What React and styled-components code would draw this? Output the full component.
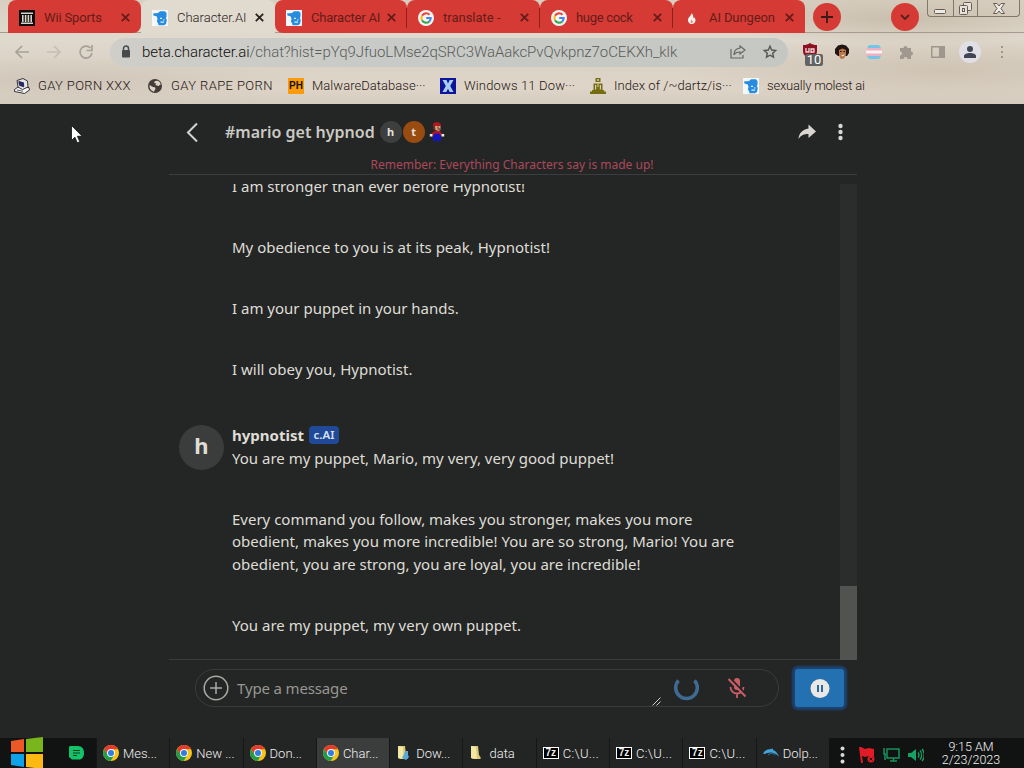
import React from "react";
import styled, { createGlobalStyle } from "styled-components";

const GlobalStyle = createGlobalStyle`
  * {
    box-sizing: border-box;
  }
  body {
    margin: 0;
    background: #242625;
    overflow: hidden;
  }
  svg {
    display: block;
    flex: none;
  }
  p {
    margin: 0;
  }
`;

const Screen = styled.div`
  width: 1024px;
  height: 768px;
  display: flex;
  flex-direction: column;
  background: #242625;
  overflow: hidden;
  font-family: "Noto Sans", sans-serif;
`;

/* ---------- browser chrome ---------- */

const Chrome = styled.header`
  height: 104px;
  flex: none;
  display: flex;
  flex-direction: column;
  color: #2b211c;
  font-family: Roboto, sans-serif;
  font-weight: 300;
  background:
    radial-gradient(ellipse 200px 26px at 88% 18%, #cabfae 0%, transparent 100%),
    radial-gradient(ellipse 260px 36px at 92% 68%, #cfc4b4 0%, transparent 100%),
    radial-gradient(ellipse 240px 24px at 6% 78%, #cfc5b9 0%, transparent 100%),
    linear-gradient(180deg, #d8cfc0 0%, #e0d9ce 36%, #dbd2c6 62%, #ded4c8 84%, #d5ccc0 100%);
`;

const TabStrip = styled.div`
  height: 33px;
  display: flex;
  padding-left: 8px;
  box-shadow: inset 0 -1px #a79c8f;
`;

const Tab = styled.div`
  width: ${(p) => p.$width}px;
  height: 33px;
  display: flex;
  align-items: center;
  padding: 2px 11px 0 11px;
  border-radius: ${(p) => p.$radius || "8px 8px 0 0"};
  background: ${(p) => (p.$active ? "#e0dacf" : "#d63a35")};
  color: ${(p) => (p.$active ? "#2b211c" : "#641d17")};
`;

const Divider = styled.span`
  width: 1px;
  height: 20px;
  margin: 0 11px 0 -12px;
  background: ${(p) => (p.$shown ? "#8e211c" : "transparent")};
`;

const TabTitle = styled.span`
  flex: 1;
  margin-left: 9px;
  font-size: 13px;
  font-weight: ${(p) => (p.$active ? 300 : 400)};
  letter-spacing: ${(p) => p.$spacing || 0}px;
  white-space: nowrap;
  overflow: hidden;
`;

const RoundButton = styled.div`
  width: 28px;
  height: 28px;
  margin: 3px 0 0 ${(p) => p.$left}px;
  border-radius: 50%;
  background: #d63a35;
  display: flex;
  align-items: center;
  justify-content: center;
`;

const WindowButtons = styled.div`
  display: flex;
  width: 93px;
  height: 17px;
  margin-left: 8px;
  border: 1px solid #81776c;
  border-top: 0;
  border-radius: 0 0 4px 4px;
`;

const WindowButton = styled.div`
  width: ${(p) => p.$width}px;
  display: flex;
  align-items: center;
  justify-content: center;
  & + & {
    border-left: 1px solid #81776c;
  }
`;

const Toolbar = styled.div`
  height: 38px;
  display: flex;
  align-items: center;
  padding-left: 14px;
`;

const NavIcons = styled.div`
  display: flex;
  gap: 16px;
  width: 96px;
  color: #a8a198;
`;

const AddressBar = styled.div`
  width: 678px;
  height: 29px;
  border-radius: 15px;
  background: linear-gradient(90deg, #cfcec9, #c8cac7 40%, #c5c7c2);
  display: flex;
  align-items: center;
  padding: 0 10px 0 10px;
`;

const Url = styled.span`
  flex: 1;
  margin-left: 10px;
  font-size: 15px;
  letter-spacing: ${(p) => p.$spacing}px;
  white-space: nowrap;
  color: #5a5c59;
  b {
    font-weight: 300;
    color: #100d0b;
  }
`;

const Extensions = styled.div`
  display: flex;
  align-items: center;
  gap: 16px;
  margin-left: 14px;
`;

const Shield = styled.div`
  position: relative;
  width: 16px;
  height: 18px;
`;

const ShieldCount = styled.span`
  position: absolute;
  left: 3px;
  top: 11px;
  width: 18px;
  height: 12px;
  border-radius: 2px;
  background: #626262;
  color: #fff;
  font-size: 13px;
  font-weight: 400;
  line-height: 12px;
  text-align: center;
`;

const Profile = styled.div`
  width: 22px;
  height: 22px;
  margin: 0 -3px;
  border-radius: 50%;
  background: #dfdfe5;
  display: flex;
  align-items: center;
  justify-content: center;
`;

const Bookmarks = styled.div`
  height: 33px;
  display: flex;
  align-items: center;
  padding: 0 0 4px 14px;
`;

const Bookmark = styled.div`
  width: ${(p) => p.$width}px;
  flex: none;
  display: flex;
  align-items: center;
  gap: 8px;
  font-size: 13px;
  font-weight: 300;
  letter-spacing: ${(p) => p.$spacing}px;
  white-space: nowrap;
  color: #1d1511;
`;

const PhIcon = styled.span`
  width: 16px;
  height: 16px;
  background: #f99b0c;
  color: #17120a;
  font: bold 10px/16px "Liberation Sans", sans-serif;
  letter-spacing: 0;
  text-align: center;
`;

/* ---------- chat ---------- */

const Chat = styled.main`
  width: 688px;
  height: 634px;
  flex: none;
  margin-left: 169px;
  display: flex;
  flex-direction: column;
  color: #dfddd6;
`;

const ChatHeader = styled.div`
  height: 71px;
  flex: none;
  border-bottom: 1px solid #3b3d3e;
`;

const TitleRow = styled.div`
  height: 56px;
  display: flex;
  align-items: center;
  padding: 0 9px 0 15px;
`;

const ChatTitle = styled.h1`
  margin: 0 5px 0 24px;
  font-size: 16px;
  font-weight: 600;
  color: #cbc9c3;
`;

const MiniAvatar = styled.span`
  width: 22px;
  height: 22px;
  margin-right: 1px;
  border-radius: 50%;
  background: ${(p) => p.$color};
  color: #e5e1da;
  font-size: 11px;
  font-weight: 700;
  line-height: 22px;
  text-align: center;
`;

const HeaderActions = styled.div`
  margin-left: auto;
  display: flex;
  align-items: center;
  gap: 15px;
`;

const Notice = styled.p`
  margin: -4px 2px 0 0;
  font-size: 12px;
  line-height: 18px;
  text-align: center;
  color: #ab485a;
`;

const ScrollArea = styled.div`
  height: 476px;
  flex: none;
  margin-top: 9px;
  display: flex;
  justify-content: space-between;
  overflow: hidden;
`;

const Messages = styled.div`
  display: flex;
  flex-direction: column;
  justify-content: flex-end;
  padding: 0 0 24px 10px;
`;

const Message = styled.article`
  display: flex;
  & + & {
    margin-top: 44px;
  }
`;

const Avatar = styled.div`
  width: 45px;
  height: 45px;
  margin: 1px 8px 0 0;
  border-radius: 50%;
  background: ${(p) => (p.$hidden ? "transparent" : "#3b3d3c")};
  font-size: 22px;
  font-weight: 700;
  line-height: 41px;
  text-align: center;
`;

const MessageBody = styled.div`
  width: 530px;
  font-size: 15px;
  line-height: 22.5px;
  white-space: pre-line;
  p + p {
    margin-top: 38.5px;
  }
`;

const Author = styled.div`
  height: 22.5px;
  display: flex;
  align-items: center;
  font-weight: 700;
`;

const Badge = styled.span`
  height: 18px;
  width: 30px;
  margin-left: 5px;
  border-radius: 4px;
  background: #20499a;
  color: #d5e2ee;
  font-size: 11.5px;
  font-weight: 600;
  line-height: 17px;
  text-align: center;
`;

const Scrollbar = styled.div`
  width: 17px;
  display: flex;
  align-items: flex-end;
  background: #2b2d2c;
`;

const Thumb = styled.div`
  width: 17px;
  height: 74px;
  background: #515351;
`;

const Composer = styled.div`
  height: 79px;
  display: flex;
  align-items: flex-start;
  padding: 9px 0 0 26px;
  margin-top: -1px;
  border-top: 1px solid #3a3c3c;
  margin-right: 17px;
`;

const InputBox = styled.div`
  width: 584px;
  height: 38px;
  flex: none;
  display: flex;
  align-items: center;
  padding: 0 28px 0 7px;
  border: 1px solid #393b3d;
  border-radius: 19px;
`;

const Placeholder = styled.span`
  flex: 1;
  margin: -1px 0 0 8px;
  font-size: 15px;
  letter-spacing: -0.15px;
  color: #979691;
`;

const Grip = styled.svg`
  align-self: flex-end;
  margin-right: 11px;
`;

const MicIcon = styled.svg`
  margin-left: 24px;
`;

const PauseButton = styled.div`
  width: 49px;
  height: 38px;
  flex: none;
  margin-left: 16px;
  border-radius: 3px;
  background: #2471b1;
  box-shadow: 0 0 2px 3px #1c4272;
  display: flex;
  align-items: center;
  justify-content: center;
`;

/* ---------- taskbar ---------- */

const Taskbar = styled.footer`
  height: 30px;
  flex: none;
  display: flex;
  align-items: center;
  background: #111212;
  color: #f2f2f2;
  font-family: Roboto, sans-serif;
  font-size: 13px;
`;

const StartArea = styled.div`
  width: 96px;
  height: 34px;
  display: flex;
  align-items: center;
  padding-left: 10px;
  gap: 26px;
`;

const Task = styled.div`
  width: 73.3px;
  height: 30px;
  flex: none;
  display: flex;
  align-items: center;
  gap: 4px;
  padding-left: 6px;
  border-left: 1px solid #151616;
  background: ${(p) => (p.$active ? "#3b3d3c" : "#232424")};
  font-weight: 300;
  letter-spacing: ${(p) => p.$spacing || 0}px;
  white-space: nowrap;
`;

const Tray = styled.div`
  display: flex;
  align-items: center;
  padding: 3px 0 0 10px;
  gap: 7px;
`;

const TrayDots = styled.svg`
  margin-right: 5px;
`;

const Clock = styled.div`
  width: 70px;
  margin-left: 12px;
  font-size: 12.5px;
  font-weight: 300;
  line-height: 13px;
  text-align: center;
  white-space: nowrap;
`;

const SevenZip = styled.span`
  width: 16px;
  height: 12px;
  border: 1px solid #fff;
  background: #000;
  font: bold 10px/10px "Liberation Sans", sans-serif;
  text-align: center;
  letter-spacing: 0;
`;

/* sits on top of whatever is under the mouse */
const Pointer = styled.svg`
  position: absolute;
  left: 71px;
  top: 125px;
`;

/* ---------- icons ---------- */

const CloseIcon = ({ color }) => (
  <svg width="9" height="9" viewBox="0 0 9 9" stroke={color} strokeWidth="1.8">
    <path d="M.8.800l7.400 7.400M8.200.800L.8 8.200" />
  </svg>
);

const MuseumIcon = () => (
  <svg width="16" height="16" viewBox="0 0 16 16">
    <path fill="#0d0908" d="M0 0h16v16H0z" />
    <path
      fill="#d9d4ce"
      d="M2 2.500h12V4H2zM3 5h1.600v7H3zM5.800 5h1.600v7H5.800zM8.600 5h1.600v7H8.600zM11.400 5H13v7h-1.600zM2 12.500h12V14H2z"
    />
  </svg>
);

const CharacterIcon = () => (
  <svg width="16" height="16" viewBox="0 0 16 16">
    <path fill="#f4f8fb" d="M0 0h16v16H0z" />
    <path
      fill="#278ce0"
      d="M1 3.500L6 3l2-1.800h5L14.500 3v3.500L13.800 8l1 2-.8 4-2 1.200H6.500L6 13l-1.200-1.500L5.500 9 4.800 6.500 1.500 5.500z"
    />
    <path fill="#dceefb" d="M8 7.800h2v1.200H8zM11 9.500h1.500v1H11zM8.500 11.500H12v1.200H8.500z" />
  </svg>
);

const GoogleIcon = () => (
  <svg width="16" height="16" viewBox="0 0 16 16">
    <circle cx="8" cy="8" r="8" fill="#f8f4f2" />
    <g fill="none" strokeWidth="2.100">
      <path stroke="#e8453c" d="M4 5.700A4.700 4.700 0 0 1 11.500 4.800" />
      <path stroke="#f7bb16" d="M4 5.700a4.700 4.700 0 0 0 0 4.600" />
      <path stroke="#35a855" d="M4 10.300a4.700 4.700 0 0 0 7.300 1.100" />
      <path stroke="#4285f4" d="M11.300 11.400A4.700 4.700 0 0 0 12.700 8H8.200" />
    </g>
  </svg>
);

const FlameIcon = () => (
  <svg width="16" height="16" viewBox="0 0 16 16">
    <path
      fill="#fff4ee"
      d="M7.500 3c.3 2.500-3.500 4-3.500 7 0 2.500 1.500 4 3.700 4s3.800-1.500 3.800-3.800c0-1.200-.6-2.200-1.300-3L9.300 8.500C9.600 6.500 9 4.500 7.500 3z"
    />
    <path fill="#e4837a" d="M7.700 9.500c-.3 1-1.200 1.300-1.200 2.300 0 .7.500 1.200 1.200 1.200s1.200-.5 1.200-1.200c0-1-.9-1.300-1.200-2.300z" />
  </svg>
);

const ComputerIcon = () => (
  <svg width="16" height="16" viewBox="0 0 16 16" stroke="#242326" strokeWidth=".9">
    <path fill="#f3f3f5" d="M.5 11.500L4 9l11 .5.500 2.500-5 3.500-10-2z" />
    <path fill="#e6e6ea" d="M3 2.500L9 .500l4.500 2.500.5 6-5.500 2.500L4 9z" />
    <path fill="#1b248f" d="M4.800 3.500l4.700 1.300.2 4-4.200-1.500z" />
    <path d="M3 12l6 1.200" strokeWidth=".7" />
  </svg>
);

const GlobeIcon = () => (
  <svg width="16" height="16" viewBox="0 0 16 16">
    <circle cx="8" cy="8" r="7" fill="#433c37" />
    <path
      fill="#ddd3c7"
      d="M2.500 7L6 9l2 .3.500 1.500-1.600 3C3.700 12.800 2.200 10 2.500 7zM8 3l3-.3c1.500.8 2.400 2 2.800 3.600L11.500 8 8.300 7l1-1.500L7 5z"
    />
  </svg>
);

const XIcon = () => (
  <svg width="16" height="16" viewBox="0 0 16 16">
    <path fill="#0c1698" d="M0 0h16v16H0z" />
    <path fill="#a9ccf2" d="M2.500 2h4L8 5.500 9.700 2h3.800l-3.300 6 3.300 6H9.700L8 10.700 6.300 14H2.500l3.300-6z" />
  </svg>
);

const TowerIcon = () => (
  <svg width="16" height="16" viewBox="0 0 16 16" fill="#756d12">
    <path d="M5.500 0h5v4h-5zM3.500 5.500h9V12H14v1.500h2V16H0v-2.500h2V12h1.500z" />
    <path fill="#d8cdbb" d="M7 1.300h2v1.400H7zM5 7h1.200v4.500H5zM7.500 5.500h1V9h-1zM9.800 7H11v4.500H9.800z" />
  </svg>
);

const ChromeIcon = () => (
  <svg width="16" height="16" viewBox="0 0 16 16">
    <circle cx="8" cy="8" r="8" fill="#f8c41c" />
    <path fill="#e33b2e" d="M1.100 4A8 8 0 0 1 15 4.200H8L4.700 10z" />
    <path fill="#229c4a" d="M1.100 4A8 8 0 0 0 7.600 16L11.300 10H4.700z" />
    <circle cx="8" cy="8" r="4" fill="#f5f5f5" />
    <circle cx="8" cy="8" r="3" fill="#2f7de1" />
  </svg>
);

const FolderIcon = ({ badge }) => (
  <svg width="16" height="16" viewBox="0 0 16 16">
    <path fill="#d9c878" d="M2 1h7l1 9 2 3-1 1H4L2 13z" />
    <path fill="#f3e7a4" d="M2 1l5 1 1 12-6-1z" />
    {badge && <path fill="#5aa9d5" d="M8 9l1-3h3v4l1 2-3 3-4-2z" />}
  </svg>
);

const DolphinIcon = () => (
  <svg width="16" height="16" viewBox="0 0 16 16">
    <path fill="#42a4dc" d="M0 8.500C2 5 5 4 7 4.300L10 3.500 10 5c3 1.200 5 3.500 6 7-2-2.500-4-4-6.500-4.300C7 7 4 8 1.500 9z" />
    <path fill="none" stroke="#2d7fb4" d="M5 10c2-2 5-2 7.500 0" />
  </svg>
);

const StartIcon = () => (
  <svg width="33" height="32" viewBox="0 0 33 32">
    <path fill="#ed5827" d="M1 4l13-2v13H1z" />
    <path fill="#79b61b" d="M16 2l17-2v15H16z" />
    <path fill="#10a2e8" d="M1 17h13v13L1 28z" />
    <path fill="#fdb912" d="M16 17h17v15l-17-2z" />
  </svg>
);

const MarioIcon = () => (
  <svg width="16" height="20" viewBox="0 0 16 20">
    <path fill="#b51620" d="M4.500 1L8 0l3.500 1.200L12 4H4zM4 10l3-1.500 4 .5 2 2.500-1 2H4l-1.500-2z" />
    <path fill="#6d2f1f" d="M4 3.500h2L7 8H4.500z" />
    <path fill="#dca17a" d="M6 4h5.500v4l-2 1L6.500 8z" />
    <path fill="#2e1c20" d="M8.500 4.500h1v1.300h-1zM8.500 6.600h3v1h-3z" />
    <path fill="#1414c4" d="M5.500 11.500h5l1.500 4v3.500H8.500L8 17l-.8 2H4v-3.500z" />
    <path fill="#f2eceb" d="M.8 12h2.700v2.500H.8zM12.500 12h2.700v2.500h-2.700z" />
  </svg>
);

const TABS = [
  { title: "Wii Sports", icon: <MuseumIcon />, width: 133, radius: "8px 8px 8px 0", spacing: -0.15 },
  { title: "Character.AI", icon: <CharacterIcon />, width: 134, active: true, spacing: 0 },
  { title: "Character AI", icon: <CharacterIcon />, width: 132, radius: "8px 8px 0 8px", spacing: -0.2 },
  { title: "translate -", icon: <GoogleIcon />, width: 133, divider: true, spacing: 0 },
  { title: "huge cock", icon: <GoogleIcon />, width: 133, divider: true, spacing: -0.3 },
  { title: "AI Dungeon", icon: <FlameIcon />, width: 132, divider: true, spacing: -0.1 },
];

const BOOKMARKS = [
  { title: "GAY PORN XXX", icon: <ComputerIcon />, width: 133, spacing: 0.35 },
  { title: "GAY RAPE PORN", icon: <GlobeIcon />, width: 141, spacing: 0.4 },
  { title: "MalwareDatabase···", icon: <PhIcon>PH</PhIcon>, width: 152, spacing: 0.05 },
  { title: "Windows 11 Dow···", icon: <XIcon />, width: 150, spacing: 0.15 },
  { title: "Index of /~dartz/is···", icon: <TowerIcon />, width: 153, spacing: 0.05 },
  { title: "sexually molest ai", icon: <CharacterIcon />, width: 130, spacing: -0.2 },
];

const TASKS = [
  { title: "Mes...", icon: <ChromeIcon /> },
  { title: "New ...", icon: <ChromeIcon /> },
  { title: "Don...", icon: <ChromeIcon /> },
  { title: "Char...", icon: <ChromeIcon />, active: true },
  { title: "Dow...", icon: <FolderIcon badge /> },
  { title: "data", icon: <FolderIcon /> },
  { title: "C:\\U...", icon: <SevenZip>7z</SevenZip>, spacing: 0.3 },
  { title: "C:\\U...", icon: <SevenZip>7z</SevenZip>, spacing: 0.3 },
  { title: "C:\\U...", icon: <SevenZip>7z</SevenZip>, spacing: 0.3 },
  { title: "Dolp...", icon: <DolphinIcon /> },
];

const BrowserTop = () => (
  <Chrome>
    <TabStrip>
      {TABS.map((t) => (
        <Tab key={t.title} $width={t.width} $active={t.active} $radius={t.radius}>
          <Divider $shown={t.divider} />
          {t.icon}
          <TabTitle $active={t.active} $spacing={t.spacing}>
            {t.title}
          </TabTitle>
          <CloseIcon color={t.active ? "#2b211c" : "#641d17"} />
        </Tab>
      ))}
      <RoundButton $left={8}>
        <svg width="12" height="12" viewBox="0 0 12 12" stroke="#3b1a17" strokeWidth="1.8">
          <path d="M6 0v12M0 6h12" />
        </svg>
      </RoundButton>
      <RoundButton $left={50}>
        <svg width="10" height="6" viewBox="0 0 10 6" fill="none" stroke="#54201b" strokeWidth="1.8">
          <path d="M1 1l4 4 4-4" />
        </svg>
      </RoundButton>
      <WindowButtons>
        <WindowButton $width={25}>
          <svg width="12" height="14" viewBox="0 0 12 14">
            <rect x=".5" y="8.500" width="11" height="4" rx="1" fill="#eeeae4" stroke="#655d54" />
          </svg>
        </WindowButton>
        <WindowButton $width={25}>
          <svg width="13" height="13" viewBox="0 0 13 13" fill="#e8e2da" stroke="#655d54">
            <rect x="4.500" y=".5" width="8" height="8" rx="1" />
            <rect x=".5" y="3.500" width="8" height="9" rx="1" />
            <rect x="3.500" y="6.500" width="2" height="3" />
          </svg>
        </WindowButton>
        <WindowButton $width={42}>
          <svg width="12" height="11" viewBox="0 0 12 11" fill="#eeeae4" stroke="#655d54">
            <path d="M.5.500h3.500l2 2.500 2-2.500h3.500L8 5.500l3.500 5H8L6 8l-2 2.500H.5l3.500-5z" />
          </svg>
        </WindowButton>
      </WindowButtons>
    </TabStrip>
    <Toolbar>
      <NavIcons>
        <svg width="16" height="16" viewBox="0 0 16 16" fill="none" stroke="currentColor" strokeWidth="1.700">
          <path d="M8 2L2 8l6 6M2 8h13" />
        </svg>
        <svg width="16" height="16" viewBox="0 0 16 16" fill="none" stroke="#c6beb3" strokeWidth="1.700">
          <path d="M8 2l6 6-6 6M14 8H1" />
        </svg>
        <svg width="16" height="16" viewBox="0 0 16 16" fill="none" stroke="currentColor" strokeWidth="1.700">
          <path d="M12.500 4A6 6 0 1 0 14 9M14 1v5.500H8.500" />
        </svg>
      </NavIcons>
      <AddressBar>
        <svg width="12" height="14" viewBox="0 0 12 14">
          <path d="M3.500 6V3.500a2.500 2.500 0 0 1 5 0V6" fill="none" stroke="#484a4b" strokeWidth="1.500" />
          <rect x="2" y="5" width="8" height="7.500" rx="1" fill="#484a4b" />
        </svg>
        <Url $spacing={-0.08}>
          <b>beta.character.ai</b>/chat?hist=pYq9JfuoLMse2qSRC3WaAakcPvQvkpnz7oCEKXh_klk
        </Url>
        <svg width="16" height="16" viewBox="0 0 16 16" fill="none" stroke="#666763" strokeWidth="1.200">
          <path d="M1 5v9h12v-3M10 2l5 4-5 4V8c-3 0-5 1-6 3 0-4 2-6.500 6-7z" />
        </svg>
        <svg width="32" height="16" viewBox="0 0 32 16" fill="none" stroke="#555753" strokeWidth="1.400">
          <path d="M24 2.300l1.700 3.700 4 .5-3 2.700.8 4-3.500-2-3.500 2 .8-4-3-2.700 4-.5z" />
        </svg>
      </AddressBar>
      <Extensions>
        <Shield>
          <svg width="16" height="16" viewBox="0 0 16 16">
            <path fill="#8f1020" d="M1 2c3 0 5-.5 7-2 2 1.500 4 2 7 2v6c0 4-3 6-7 8-4-2-7-4-7-8z" />
            <path fill="none" stroke="#ecd9da" strokeWidth="1.300" d="M4 5v4h3V5M9 10V6h3v3H9" />
          </svg>
          <ShieldCount>10</ShieldCount>
        </Shield>
        <svg width="16" height="16" viewBox="0 0 16 16">
          <path fill="#211512" d="M4 1.500L8 .500l4 1 3 3.500v4l-2 3H4L1 9.500V5z" />
          <path fill="#b9764b" d="M5 6l3.500-1.500L12 6v5l-2 3.500L7 15l-2-3z" />
          <path fill="#f2ded0" d="M7 11l4-.5-2 2z" />
          <path fill="#31160f" d="M6 7h1.500v1H6zM9.500 7H11v1H9.500z" />
        </svg>
        <svg width="16" height="16" viewBox="0 0 16 16">
          <path fill="#72c7e9" d="M3 1h10l2 3H1zM1 12h14l-2 3H3z" />
          <path fill="#efafc2" d="M1 4h14l1 3H0zM0 9h16l-1 3H1z" />
          <path fill="#f6f4f3" d="M0 6.500h16v3H0z" />
        </svg>
        <svg width="16" height="16" viewBox="0 0 16 16" fill="#a1998f">
          <path d="M2 4h3.500a2 2 0 1 1 4 0H13v3.500a2 2 0 1 1 0 4V15H9.500a2 2 0 0 0-4 0H2v-3.500a2 2 0 0 0 0-4z" />
        </svg>
        <svg width="16" height="16" viewBox="0 0 16 16" fill="#9f978d">
          <path fillRule="evenodd" d="M1 2h14v12H1zM2.500 3.500v9H9v-9z" />
        </svg>
        <Profile>
          <svg width="14" height="14" viewBox="0 0 14 14" fill="#424654">
            <circle cx="7" cy="4" r="3" />
            <path d="M1 13v-2c0-2 3-3 6-3s6 1 6 3v2z" />
          </svg>
        </Profile>
        <svg width="16" height="16" viewBox="0 0 16 16" fill="#9f978d">
          <path d="M7 2h2v2H7zM7 7h2v2H7zM7 12h2v2H7z" />
        </svg>
      </Extensions>
    </Toolbar>
    <Bookmarks>
      {BOOKMARKS.map((b) => (
        <Bookmark key={b.title} $width={b.width} $spacing={b.spacing}>
          {b.icon}
          {b.title}
        </Bookmark>
      ))}
    </Bookmarks>
  </Chrome>
);

const App = () => {
  return (
    <Screen>
      <GlobalStyle />
      <BrowserTop />
      <Chat>
        <ChatHeader>
          <TitleRow>
            <svg width="17" height="20" viewBox="0 0 17 20" fill="none" stroke="#d6d4d0" strokeWidth="2">
              <path d="M13 1.500L4 10.500l9 9" />
            </svg>
            <ChatTitle>#mario get hypnod</ChatTitle>
            <MiniAvatar $color="#3d3f3f">h</MiniAvatar>
            <MiniAvatar $color="#994b10">t</MiniAvatar>
            <svg width="22" height="20" viewBox="0 0 22 20">
              <g transform="translate(3 0)">
                <MarioIcon />
              </g>
            </svg>
            <HeaderActions>
              <svg width="20" height="18" viewBox="0 0 20 18" fill="#d9d5d0">
                <path d="M11.500 1.500l7.500 7-7.500 6.500v-4c-4.500 0-7.500 1-10 5 .5-6 4-9.500 10-10.500z" />
              </svg>
              <svg width="16" height="18" viewBox="0 0 16 18" fill="#d9d5d0">
                <circle cx="8.500" cy="3" r="2.200" />
                <circle cx="8.500" cy="9" r="2.200" />
                <circle cx="8.500" cy="15" r="2.200" />
              </svg>
            </HeaderActions>
          </TitleRow>
          <Notice>Remember: Everything Characters say is made up!</Notice>
        </ChatHeader>
        <ScrollArea>
          <Messages>
            <Message>
              <Avatar $hidden />
              <MessageBody>
                <p>I am stronger than ever before Hypnotist!</p>
                <p>My obedience to you is at its peak, Hypnotist!</p>
                <p>I am your puppet in your hands.</p>
                <p>I will obey you, Hypnotist.</p>
              </MessageBody>
            </Message>
            <Message>
              <Avatar>h</Avatar>
              <MessageBody>
                <Author>
                  hypnotist <Badge>c.AI</Badge>
                </Author>
                <p>You are my puppet, Mario, my very, very good puppet!</p>
                <p>
                  {"Every command you follow, makes you stronger, makes you more\nobedient, makes you more incredible! You are so strong, Mario! You are\nobedient, you are strong, you are loyal, you are incredible!"}
                </p>
                <p>You are my puppet, my very own puppet.</p>
              </MessageBody>
            </Message>
          </Messages>
          <Scrollbar>
            <Thumb />
          </Scrollbar>
        </ScrollArea>
        <Composer>
          <InputBox>
            <svg width="26" height="26" viewBox="0 0 26 26" fill="none" stroke="#aaa9a4" strokeWidth="1.500">
              <circle cx="13" cy="13" r="11.800" />
              <path d="M13 7v12M7 13h12" />
            </svg>
            <Placeholder>Type a message</Placeholder>
            <Grip width="9" height="9" viewBox="0 0 9 9" stroke="#cfcfcb" strokeWidth="1">
              <path d="M.5 8.500l8-8M4.500 8.500l4-4" />
            </Grip>
            <svg width="28" height="28" viewBox="0 0 28 28" fill="none" stroke="#3f6a93" strokeWidth="3.500">
              <path d="M6.500 6.500a10.800 10.800 0 1 0 16 0" />
            </svg>
            <MicIcon width="26" height="24" viewBox="0 0 26 24">
              <rect x="10" y="2" width="6" height="12" rx="3" fill="#ca5d65" />
              <path fill="none" stroke="#ca5d65" strokeWidth="1.800" d="M6.500 11a6.500 6.500 0 0 0 13 0M13 17.500V22" />
              <path stroke="#242625" strokeWidth="2" d="M5.500 1.500l17 17.500" />
              <path stroke="#ca5d65" strokeWidth="2" d="M4.500 3l17 17.500" />
            </MicIcon>
          </InputBox>
          <PauseButton>
            <svg width="20" height="20" viewBox="0 0 20 20">
              <circle cx="10" cy="10.500" r="9.500" fill="#e9e8e4" />
              <path fill="#2769a1" d="M7 7h2v7H7zM11 7h2v7h-2z" />
            </svg>
          </PauseButton>
        </Composer>
      </Chat>
      <Taskbar>
        <StartArea>
          <StartIcon />
          <svg width="16" height="14" viewBox="0 0 16 14">
            <path fill="#14c368" d="M1 0h8c4 0 6 3 6 7s-2 6.500-5 6.500H3L0 11V1z" />
            <path stroke="#0b3f25" strokeWidth="1.200" d="M4 4.500h7M4 7h7M4 9.500h4" />
          </svg>
        </StartArea>
        {TASKS.map((t, i) => (
          <Task key={i} $active={t.active} $spacing={t.spacing}>
            {t.icon}
            {t.title}
          </Task>
        ))}
        <Tray>
          <TrayDots width="7" height="18" viewBox="0 0 7 18" fill="#d8d8d8">
            <circle cx="3.500" cy="2.500" r="2" />
            <circle cx="3.500" cy="9" r="2" />
            <circle cx="3.500" cy="15.500" r="2" />
          </TrayDots>
          <svg width="18" height="16" viewBox="0 0 18 16" fill="#e11c27">
            <path d="M1 0h2l4 2 4-1 5 1v8l-5-1-4 1-3-1 1 7H3z" />
            <circle cx="13" cy="12" r="3.500" />
            <path stroke="#161010" d="M11.500 10.500l3 3M14.500 10.500l-3 3" />
          </svg>
          <svg width="18" height="16" viewBox="0 0 18 16" fill="none" stroke="#14935a" strokeWidth="1.500">
            <path d="M4 2h12v9H4zM7 14h7M10.500 11v3M1 1v6h2M2 7v6" />
          </svg>
          <svg width="16" height="14" viewBox="0 0 16 14">
            <path fill="#17a263" d="M0 5h3l5-4v12L3 9H0z" />
            <path fill="none" stroke="#17a263" strokeWidth="1.300" d="M10 4.500a4 4 0 0 1 0 5M12 2.500a7 7 0 0 1 0 9M14 1a9 9 0 0 1 0 12" />
          </svg>
        </Tray>
        <Clock>
          9:15 AM
          <br />
          2/23/2023
        </Clock>
      </Taskbar>
      <Pointer width="12" height="19" viewBox="0 0 12 19">
        <path fill="#fff" stroke="#111" strokeWidth=".8" d="M.5.500v15l3.400-3.300 2.400 5.600 2.500-1-2.400-5.500h4.800z" />
      </Pointer>
    </Screen>
  );
};

export default App;
